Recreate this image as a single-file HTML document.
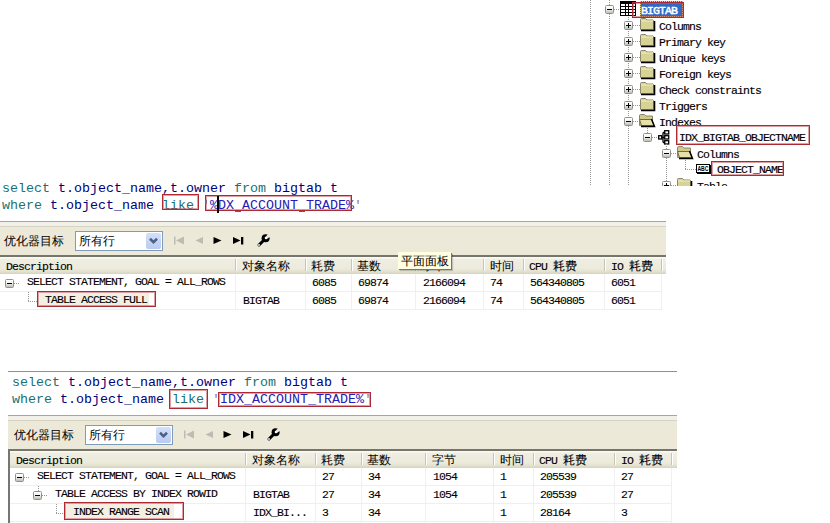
<!DOCTYPE html><html><head><meta charset="utf-8"><style>
html,body{margin:0;padding:0;background:#fff;}
body{width:830px;height:523px;position:relative;overflow:hidden;}
div{position:absolute;}
.sql{font-family:"Liberation Mono",monospace;font-size:13.33px;line-height:17px;color:#00007A;white-space:pre;}
.kw{color:#1B7070;}
.str{color:#1F22B3;}
.q{color:#8E7F8F;}
.g{font-family:"Liberation Mono",monospace;font-size:11.5px;letter-spacing:-0.9px;line-height:16px;color:#000;white-space:pre;-webkit-text-stroke:0.1px #000;}
.cjk{font-family:"Liberation Sans",sans-serif;font-size:12px;line-height:16px;color:#000;white-space:pre;}
.c2{font-family:"Liberation Sans",sans-serif;letter-spacing:0;}
.exp{width:9px;height:9px;box-sizing:border-box;border:1px solid #909090;border-radius:1.5px;background:linear-gradient(#fff 0,#F2F2EE 45%,#BDBDB5 100%);}
.exp i{position:absolute;background:#000;}
.exp .h{left:1px;top:3px;width:5px;height:1px;}
.exp .v{left:3px;top:1px;width:1px;height:5px;}
.texp{width:9px;height:9px;box-sizing:border-box;border:1px solid #909090;border-radius:1.5px;background:linear-gradient(#fff 0,#F2F2EE 45%,#BDBDB5 100%);}
.texp i{position:absolute;background:#000;}
.texp .h{left:1px;top:3px;width:5px;height:1px;}
.texp .v{left:3px;top:1px;width:1px;height:5px;}
.t{font-family:"Liberation Mono",monospace;font-size:11.5px;letter-spacing:-0.9px;line-height:16px;color:#000;white-space:pre;-webkit-text-stroke:0.15px #000;}

</style></head><body>
<div style="left:8px;top:371px;width:669px;height:1px;background:#8F8F8F;"></div>
<div class="sql" style="left:12px;top:374px;"><span class="kw">select</span> t.object_name,t.owner <span class="kw">from</span> bigtab t
<span class="kw">where</span> t.object_name <span class="kw">like</span> <span class="q">'</span><span class="str">IDX_ACCOUNT_TRADE%</span><span class="q">'</span></div>
<div style="left:8px;top:415px;width:669px;height:1px;background:#A7A69C;"></div>
<div style="left:8px;top:416px;width:669px;height:4px;background:#F2F1E9;"></div>
<div style="left:8px;top:420px;width:669px;height:1px;background:#D6D3C2;"></div>
<div style="left:8px;top:421px;width:669px;height:28px;background:#ECE9D8;"></div>
<div style="left:8px;top:449px;width:669px;height:2px;background:#76756C;"></div>
<div class="cjk" style="left:14px;top:427px;">优化器目标</div>
<div style="left:85px;top:425px;width:88px;height:20px;background:#fff;border:1px solid #7F9DB9;box-sizing:border-box;"></div>
<div class="cjk" style="left:89px;top:427px;">所有行</div>
<div style="left:156px;top:427px;width:15px;height:16px;background:linear-gradient(#D4E0FA,#B9CBF3);border-radius:2px;"></div>
<svg style="position:absolute;left:159px;top:431px" width="10" height="8" viewBox="0 0 10 8"><path d="M1 1.8 L4.5 5.2 L8 1.8" stroke="#4D6185" stroke-width="2.6" fill="none"/></svg>
<svg style="position:absolute;left:184px;top:430px" width="90" height="14" viewBox="0 0 90 14"><rect x="0" y="0.5" width="1.5" height="8" fill="#BDBCB3"/><path d="M10 0.5 L2 4.5 L10 8.5 Z" fill="#BDBCB3"/><path d="M29 1 L21.5 4.5 L29 8 Z" fill="#BDBCB3"/><path d="M39.5 1 L47.5 4.5 L39.5 8 Z" fill="#000"/><path d="M59 1 L66.5 4.5 L59 8 Z" fill="#000"/><rect x="67" y="1" width="2.3" height="7.5" fill="#000"/></svg>
<svg style="position:absolute;left:266px;top:427px" width="15" height="15" viewBox="0 0 15 15"><path d="M3 12 L8 7" stroke="#000" stroke-width="3" stroke-linecap="round"/><circle cx="9.6" cy="5.2" r="4" fill="#000"/><path d="M9.2 4.6 L12.6 0.2 L15.5 2.8 L10.6 6 Z" fill="#ECE9D8"/><circle cx="10" cy="5" r="1.3" fill="#fff"/><circle cx="3" cy="12" r="0.9" fill="#fff"/></svg>
<div style="left:8px;top:449px;width:2px;height:120px;background:#767676;"></div>
<div style="left:10px;top:451px;width:667px;height:17px;background:linear-gradient(#FAFAF5 0,#FAFAF5 1px,#EFEEE2 2px,#EBEADB 12px,#E2DFCC 15px,#D5D2C0 17px);"></div>
<div style="left:245px;top:453px;width:1px;height:12px;background:#C7C5B2;"></div>
<div style="left:246px;top:453px;width:1px;height:12px;background:#FFFFFF;"></div>
<div style="left:315px;top:453px;width:1px;height:12px;background:#C7C5B2;"></div>
<div style="left:316px;top:453px;width:1px;height:12px;background:#FFFFFF;"></div>
<div style="left:361px;top:453px;width:1px;height:12px;background:#C7C5B2;"></div>
<div style="left:362px;top:453px;width:1px;height:12px;background:#FFFFFF;"></div>
<div style="left:425px;top:453px;width:1px;height:12px;background:#C7C5B2;"></div>
<div style="left:426px;top:453px;width:1px;height:12px;background:#FFFFFF;"></div>
<div style="left:493px;top:453px;width:1px;height:12px;background:#C7C5B2;"></div>
<div style="left:494px;top:453px;width:1px;height:12px;background:#FFFFFF;"></div>
<div style="left:533px;top:453px;width:1px;height:12px;background:#C7C5B2;"></div>
<div style="left:534px;top:453px;width:1px;height:12px;background:#FFFFFF;"></div>
<div style="left:614px;top:453px;width:1px;height:12px;background:#C7C5B2;"></div>
<div style="left:615px;top:453px;width:1px;height:12px;background:#FFFFFF;"></div>
<div style="left:671px;top:453px;width:1px;height:12px;background:#C7C5B2;"></div>
<div style="left:672px;top:453px;width:1px;height:12px;background:#FFFFFF;"></div>
<div class="g" style="left:16px;top:453px;">Description</div>
<div class="cjk" style="left:252px;top:452px;">对象名称</div>
<div class="cjk" style="left:321px;top:452px;">耗费</div>
<div class="cjk" style="left:367px;top:452px;">基数</div>
<div class="cjk" style="left:432px;top:452px;">字节</div>
<div class="cjk" style="left:500px;top:452px;">时间</div>
<div class="g" style="left:539px;top:452px;">CPU <span class="c2">耗费</span></div>
<div class="g" style="left:621px;top:452px;">IO <span class="c2">耗费</span></div>
<div style="left:10px;top:485px;width:661px;height:1px;background:#EFEFEF;"></div>
<div style="left:10px;top:503px;width:661px;height:1px;background:#EFEFEF;"></div>
<div style="left:10px;top:521px;width:661px;height:1px;background:#EFEFEF;"></div>
<div style="left:245px;top:468px;width:1px;height:60px;background:#F0F0F0;"></div>
<div style="left:315px;top:468px;width:1px;height:60px;background:#F0F0F0;"></div>
<div style="left:361px;top:468px;width:1px;height:60px;background:#F0F0F0;"></div>
<div style="left:425px;top:468px;width:1px;height:60px;background:#F0F0F0;"></div>
<div style="left:493px;top:468px;width:1px;height:60px;background:#F0F0F0;"></div>
<div style="left:533px;top:468px;width:1px;height:60px;background:#F0F0F0;"></div>
<div style="left:614px;top:468px;width:1px;height:60px;background:#F0F0F0;"></div>
<div style="left:671px;top:468px;width:1px;height:60px;background:#F0F0F0;"></div>
<div class="g" style="left:322px;top:469px;">27</div>
<div class="g" style="left:368px;top:469px;">34</div>
<div class="g" style="left:433px;top:469px;">1054</div>
<div class="g" style="left:500px;top:469px;">1</div>
<div class="g" style="left:540px;top:469px;">205539</div>
<div class="g" style="left:621px;top:469px;">27</div>
<div class="g" style="left:253px;top:487px;">BIGTAB</div>
<div class="g" style="left:322px;top:487px;">27</div>
<div class="g" style="left:368px;top:487px;">34</div>
<div class="g" style="left:433px;top:487px;">1054</div>
<div class="g" style="left:500px;top:487px;">1</div>
<div class="g" style="left:540px;top:487px;">205539</div>
<div class="g" style="left:621px;top:487px;">27</div>
<div class="g" style="left:253px;top:505px;">IDX_BI...</div>
<div class="g" style="left:322px;top:505px;">3</div>
<div class="g" style="left:368px;top:505px;">34</div>
<div class="g" style="left:500px;top:505px;">1</div>
<div class="g" style="left:540px;top:505px;">28164</div>
<div class="g" style="left:621px;top:505px;">3</div>
<div class="exp" style="left:15px;top:473px;"><i class="h"></i></div>
<div style="left:24px;top:477px;width:6px;height:1px;background:repeating-linear-gradient(to right,#969696 0 1px,transparent 1px 2px);"></div>
<div class="g" style="left:37px;top:468px;">SELECT STATEMENT, GOAL = ALL_ROWS</div>
<div style="left:38px;top:486px;width:1px;height:5px;background:repeating-linear-gradient(to bottom,#969696 0 1px,transparent 1px 2px);"></div>
<div class="exp" style="left:33px;top:491px;"><i class="h"></i></div>
<div style="left:42px;top:495px;width:6px;height:1px;background:repeating-linear-gradient(to right,#969696 0 1px,transparent 1px 2px);"></div>
<div class="g" style="left:55px;top:486px;">TABLE ACCESS BY INDEX ROWID</div>
<div style="left:56px;top:504px;width:1px;height:9px;background:repeating-linear-gradient(to bottom,#969696 0 1px,transparent 1px 2px);"></div>
<div style="left:56px;top:513px;width:8px;height:1px;background:repeating-linear-gradient(to right,#969696 0 1px,transparent 1px 2px);"></div>
<div style="left:66px;top:504px;width:108px;height:14px;background:#F3EFE2;"></div>
<div class="g" style="left:73px;top:504px;">INDEX RANGE SCAN</div>
<div style="left:64px;top:502px;width:120px;height:18px;border:1px solid #AE2A32;box-shadow:inset 0 0 0 1px rgba(196,80,88,0.55);box-sizing:border-box;"></div>
<div style="left:169px;top:389px;width:39px;height:20px;border:1px solid #AE2A32;box-shadow:inset 0 0 0 1px rgba(196,80,88,0.55);box-sizing:border-box;"></div>
<div style="left:218px;top:392px;width:153px;height:15px;border:1px solid #AE2A32;box-shadow:inset 0 0 0 1px rgba(196,80,88,0.55);box-sizing:border-box;"></div>
<div class="sql" style="left:2px;top:180px;"><span class="kw">select</span> t.object_name,t.owner <span class="kw">from</span> bigtab t
<span class="kw">where</span> t.object_name <span class="kw">like</span> <span class="q">'</span><span class="str">%DX_ACCOUNT_TRADE%</span><span class="q">'</span></div>
<div style="left:-2px;top:221px;width:668px;height:1px;background:#A7A69C;"></div>
<div style="left:-2px;top:222px;width:668px;height:4px;background:#F2F1E9;"></div>
<div style="left:-2px;top:226px;width:668px;height:1px;background:#D6D3C2;"></div>
<div style="left:-2px;top:227px;width:668px;height:28px;background:#ECE9D8;"></div>
<div style="left:-2px;top:255px;width:668px;height:2px;background:#76756C;"></div>
<div class="cjk" style="left:4px;top:233px;">优化器目标</div>
<div style="left:75px;top:231px;width:88px;height:20px;background:#fff;border:1px solid #7F9DB9;box-sizing:border-box;"></div>
<div class="cjk" style="left:79px;top:233px;">所有行</div>
<div style="left:146px;top:233px;width:15px;height:16px;background:linear-gradient(#D4E0FA,#B9CBF3);border-radius:2px;"></div>
<svg style="position:absolute;left:149px;top:237px" width="10" height="8" viewBox="0 0 10 8"><path d="M1 1.8 L4.5 5.2 L8 1.8" stroke="#4D6185" stroke-width="2.6" fill="none"/></svg>
<svg style="position:absolute;left:174px;top:236px" width="90" height="14" viewBox="0 0 90 14"><rect x="0" y="0.5" width="1.5" height="8" fill="#BDBCB3"/><path d="M10 0.5 L2 4.5 L10 8.5 Z" fill="#BDBCB3"/><path d="M29 1 L21.5 4.5 L29 8 Z" fill="#BDBCB3"/><path d="M39.5 1 L47.5 4.5 L39.5 8 Z" fill="#000"/><path d="M59 1 L66.5 4.5 L59 8 Z" fill="#000"/><rect x="67" y="1" width="2.3" height="7.5" fill="#000"/></svg>
<svg style="position:absolute;left:256px;top:233px" width="15" height="15" viewBox="0 0 15 15"><path d="M3 12 L8 7" stroke="#000" stroke-width="3" stroke-linecap="round"/><circle cx="9.6" cy="5.2" r="4" fill="#000"/><path d="M9.2 4.6 L12.6 0.2 L15.5 2.8 L10.6 6 Z" fill="#ECE9D8"/><circle cx="10" cy="5" r="1.3" fill="#fff"/><circle cx="3" cy="12" r="0.9" fill="#fff"/></svg>
<div style="left:-2px;top:255px;width:2px;height:120px;background:#767676;"></div>
<div style="left:0px;top:257px;width:666px;height:17px;background:linear-gradient(#FAFAF5 0,#FAFAF5 1px,#EFEEE2 2px,#EBEADB 12px,#E2DFCC 15px,#D5D2C0 17px);"></div>
<div style="left:235px;top:259px;width:1px;height:12px;background:#C7C5B2;"></div>
<div style="left:236px;top:259px;width:1px;height:12px;background:#FFFFFF;"></div>
<div style="left:305px;top:259px;width:1px;height:12px;background:#C7C5B2;"></div>
<div style="left:306px;top:259px;width:1px;height:12px;background:#FFFFFF;"></div>
<div style="left:351px;top:259px;width:1px;height:12px;background:#C7C5B2;"></div>
<div style="left:352px;top:259px;width:1px;height:12px;background:#FFFFFF;"></div>
<div style="left:415px;top:259px;width:1px;height:12px;background:#C7C5B2;"></div>
<div style="left:416px;top:259px;width:1px;height:12px;background:#FFFFFF;"></div>
<div style="left:483px;top:259px;width:1px;height:12px;background:#C7C5B2;"></div>
<div style="left:484px;top:259px;width:1px;height:12px;background:#FFFFFF;"></div>
<div style="left:523px;top:259px;width:1px;height:12px;background:#C7C5B2;"></div>
<div style="left:524px;top:259px;width:1px;height:12px;background:#FFFFFF;"></div>
<div style="left:604px;top:259px;width:1px;height:12px;background:#C7C5B2;"></div>
<div style="left:605px;top:259px;width:1px;height:12px;background:#FFFFFF;"></div>
<div style="left:661px;top:259px;width:1px;height:12px;background:#C7C5B2;"></div>
<div style="left:662px;top:259px;width:1px;height:12px;background:#FFFFFF;"></div>
<div class="g" style="left:6px;top:259px;">Description</div>
<div class="cjk" style="left:242px;top:258px;">对象名称</div>
<div class="cjk" style="left:311px;top:258px;">耗费</div>
<div class="cjk" style="left:357px;top:258px;">基数</div>
<div class="cjk" style="left:422px;top:258px;">字节</div>
<div class="cjk" style="left:490px;top:258px;">时间</div>
<div class="g" style="left:529px;top:258px;">CPU <span class="c2">耗费</span></div>
<div class="g" style="left:611px;top:258px;">IO <span class="c2">耗费</span></div>
<div style="left:0px;top:291px;width:661px;height:1px;background:#EFEFEF;"></div>
<div style="left:0px;top:309px;width:661px;height:1px;background:#EFEFEF;"></div>
<div style="left:0px;top:327px;width:661px;height:1px;background:#EFEFEF;"></div>
<div style="left:235px;top:274px;width:1px;height:60px;background:#F0F0F0;"></div>
<div style="left:305px;top:274px;width:1px;height:60px;background:#F0F0F0;"></div>
<div style="left:351px;top:274px;width:1px;height:60px;background:#F0F0F0;"></div>
<div style="left:415px;top:274px;width:1px;height:60px;background:#F0F0F0;"></div>
<div style="left:483px;top:274px;width:1px;height:60px;background:#F0F0F0;"></div>
<div style="left:523px;top:274px;width:1px;height:60px;background:#F0F0F0;"></div>
<div style="left:604px;top:274px;width:1px;height:60px;background:#F0F0F0;"></div>
<div style="left:661px;top:274px;width:1px;height:60px;background:#F0F0F0;"></div>
<div class="g" style="left:312px;top:275px;">6085</div>
<div class="g" style="left:358px;top:275px;">69874</div>
<div class="g" style="left:423px;top:275px;">2166094</div>
<div class="g" style="left:490px;top:275px;">74</div>
<div class="g" style="left:530px;top:275px;">564340805</div>
<div class="g" style="left:611px;top:275px;">6051</div>
<div class="g" style="left:243px;top:293px;">BIGTAB</div>
<div class="g" style="left:312px;top:293px;">6085</div>
<div class="g" style="left:358px;top:293px;">69874</div>
<div class="g" style="left:423px;top:293px;">2166094</div>
<div class="g" style="left:490px;top:293px;">74</div>
<div class="g" style="left:530px;top:293px;">564340805</div>
<div class="g" style="left:611px;top:293px;">6051</div>
<div style="left:0px;top:310px;width:830px;height:60px;background:#fff;"></div>
<div class="exp" style="left:5px;top:279px;"><i class="h"></i></div>
<div style="left:14px;top:283px;width:6px;height:1px;background:repeating-linear-gradient(to right,#969696 0 1px,transparent 1px 2px);"></div>
<div class="g" style="left:27px;top:274px;">SELECT STATEMENT, GOAL = ALL_ROWS</div>
<div style="left:28px;top:292px;width:1px;height:10px;background:repeating-linear-gradient(to bottom,#969696 0 1px,transparent 1px 2px);"></div>
<div style="left:28px;top:301px;width:9px;height:1px;background:repeating-linear-gradient(to right,#969696 0 1px,transparent 1px 2px);"></div>
<div style="left:39px;top:293px;width:110px;height:13px;background:#F3EFE2;"></div>
<div class="g" style="left:45px;top:292px;">TABLE ACCESS FULL</div>
<div style="left:37px;top:291px;width:119px;height:16px;border:1px solid #AE2A32;box-shadow:inset 0 0 0 1px rgba(196,80,88,0.55);box-sizing:border-box;"></div>
<div style="left:162px;top:194px;width:37px;height:16px;border:1px solid #AE2A32;box-shadow:inset 0 0 0 1px rgba(196,80,88,0.55);box-sizing:border-box;"></div>
<div style="left:205px;top:195px;width:147px;height:16px;border:1px solid #AE2A32;box-shadow:inset 0 0 0 1px rgba(196,80,88,0.55);box-sizing:border-box;"></div>
<div style="left:217px;top:196px;width:2px;height:17px;background:#000;"></div>
<div class="sql" style="left:202px;top:197px;color:#8E5F8F;">'</div>
<div style="left:235px;top:211px;width:6px;height:1px;background:#7A4A9A;"></div>
<div style="left:299px;top:211px;width:6px;height:1px;background:#7A4A9A;"></div>
<div style="left:398px;top:252px;width:53px;height:17px;background:#FFFFE1;box-shadow:1px 1px 0 #767670,2px 2px 1px rgba(0,0,0,0.18);"></div>
<div class="cjk" style="left:401px;top:253px;">平面面板</div>
<div style="left:590px;top:0px;width:240px;height:186px;background:#fff;"></div>
<div style="left:590px;top:0px;width:1px;height:186px;background:repeating-linear-gradient(to bottom,#969696 0 1px,transparent 1px 2px);"></div>
<div style="left:609px;top:0px;width:1px;height:5px;background:repeating-linear-gradient(to bottom,#969696 0 1px,transparent 1px 2px);"></div>
<div style="left:609px;top:14px;width:1px;height:172px;background:repeating-linear-gradient(to bottom,#969696 0 1px,transparent 1px 2px);"></div>
<div class="texp" style="left:605px;top:5px;"><i class="h"></i></div>
<div style="left:614px;top:9px;width:6px;height:1px;background:repeating-linear-gradient(to right,#969696 0 1px,transparent 1px 2px);"></div>
<svg style="position:absolute;left:620px;top:1px" width="16" height="15" viewBox="0 0 16 15"><rect x="0" y="0" width="16" height="15" fill="#000"/><rect x="1" y="3" width="4" height="2" fill="#fff"/><rect x="6" y="3" width="2" height="2" fill="#fff"/><rect x="9" y="3" width="3" height="2" fill="#fff"/><rect x="13" y="3" width="2" height="2" fill="#fff"/><rect x="1" y="6" width="4" height="2" fill="#fff"/><rect x="6" y="6" width="2" height="2" fill="#fff"/><rect x="9" y="6" width="3" height="2" fill="#fff"/><rect x="13" y="6" width="2" height="2" fill="#fff"/><rect x="1" y="9" width="4" height="2" fill="#fff"/><rect x="6" y="9" width="2" height="2" fill="#fff"/><rect x="9" y="9" width="3" height="2" fill="#fff"/><rect x="13" y="9" width="2" height="2" fill="#fff"/><rect x="1" y="12" width="4" height="2" fill="#fff"/><rect x="6" y="12" width="2" height="2" fill="#fff"/><rect x="9" y="12" width="3" height="2" fill="#fff"/><rect x="13" y="12" width="2" height="2" fill="#fff"/></svg>
<div style="left:640px;top:1px;width:43px;height:16px;background:#316AC5;"></div>
<div style="left:640px;top:1px;width:43px;height:16px;border:1px dotted #E8D080;box-sizing:border-box;"></div>
<div class="t" style="left:641px;top:3px;color:#fff;-webkit-text-stroke:0.5px #fff;">BIGTAB</div>
<div style="left:632px;top:2px;width:52px;height:16px;border:1px solid #AE2A32;box-shadow:inset 0 0 0 1px rgba(196,80,88,0.55);box-sizing:border-box;"></div>
<div style="left:628px;top:17px;width:1px;height:100px;background:repeating-linear-gradient(to bottom,#969696 0 1px,transparent 1px 2px);"></div>
<div class="texp" style="left:624px;top:21px;"><i class="h"></i><i class="v"></i></div>
<div style="left:633px;top:25px;width:7px;height:1px;background:repeating-linear-gradient(to right,#969696 0 1px,transparent 1px 2px);"></div>
<svg style="position:absolute;left:640px;top:18px" width="16" height="14" viewBox="0 0 16 14"><path d="M0.5 3 L0.5 1.5 Q0.5 0.5 1.5 0.5 L5.5 0.5 L7 2 L13 2 Q13.5 2 13.5 2.5 L13.5 11.5 L0.5 11.5 Z" fill="#D6D394" stroke="#8A876A"/><path d="M1 3 L13 3" stroke="#F2EFC4"/><path d="M14.5 3 L14.5 12.5 L1 12.5" stroke="#000" stroke-width="1.6" fill="none"/></svg>
<div class="t" style="left:659px;top:19px;">Columns</div>
<div class="texp" style="left:624px;top:37px;"><i class="h"></i><i class="v"></i></div>
<div style="left:633px;top:41px;width:7px;height:1px;background:repeating-linear-gradient(to right,#969696 0 1px,transparent 1px 2px);"></div>
<svg style="position:absolute;left:640px;top:34px" width="16" height="14" viewBox="0 0 16 14"><path d="M0.5 3 L0.5 1.5 Q0.5 0.5 1.5 0.5 L5.5 0.5 L7 2 L13 2 Q13.5 2 13.5 2.5 L13.5 11.5 L0.5 11.5 Z" fill="#D6D394" stroke="#8A876A"/><path d="M1 3 L13 3" stroke="#F2EFC4"/><path d="M14.5 3 L14.5 12.5 L1 12.5" stroke="#000" stroke-width="1.6" fill="none"/></svg>
<div class="t" style="left:659px;top:35px;">Primary key</div>
<div class="texp" style="left:624px;top:53px;"><i class="h"></i><i class="v"></i></div>
<div style="left:633px;top:57px;width:7px;height:1px;background:repeating-linear-gradient(to right,#969696 0 1px,transparent 1px 2px);"></div>
<svg style="position:absolute;left:640px;top:50px" width="16" height="14" viewBox="0 0 16 14"><path d="M0.5 3 L0.5 1.5 Q0.5 0.5 1.5 0.5 L5.5 0.5 L7 2 L13 2 Q13.5 2 13.5 2.5 L13.5 11.5 L0.5 11.5 Z" fill="#D6D394" stroke="#8A876A"/><path d="M1 3 L13 3" stroke="#F2EFC4"/><path d="M14.5 3 L14.5 12.5 L1 12.5" stroke="#000" stroke-width="1.6" fill="none"/></svg>
<div class="t" style="left:659px;top:51px;">Unique keys</div>
<div class="texp" style="left:624px;top:69px;"><i class="h"></i><i class="v"></i></div>
<div style="left:633px;top:73px;width:7px;height:1px;background:repeating-linear-gradient(to right,#969696 0 1px,transparent 1px 2px);"></div>
<svg style="position:absolute;left:640px;top:66px" width="16" height="14" viewBox="0 0 16 14"><path d="M0.5 3 L0.5 1.5 Q0.5 0.5 1.5 0.5 L5.5 0.5 L7 2 L13 2 Q13.5 2 13.5 2.5 L13.5 11.5 L0.5 11.5 Z" fill="#D6D394" stroke="#8A876A"/><path d="M1 3 L13 3" stroke="#F2EFC4"/><path d="M14.5 3 L14.5 12.5 L1 12.5" stroke="#000" stroke-width="1.6" fill="none"/></svg>
<div class="t" style="left:659px;top:67px;">Foreign keys</div>
<div class="texp" style="left:624px;top:85px;"><i class="h"></i><i class="v"></i></div>
<div style="left:633px;top:89px;width:7px;height:1px;background:repeating-linear-gradient(to right,#969696 0 1px,transparent 1px 2px);"></div>
<svg style="position:absolute;left:640px;top:82px" width="16" height="14" viewBox="0 0 16 14"><path d="M0.5 3 L0.5 1.5 Q0.5 0.5 1.5 0.5 L5.5 0.5 L7 2 L13 2 Q13.5 2 13.5 2.5 L13.5 11.5 L0.5 11.5 Z" fill="#D6D394" stroke="#8A876A"/><path d="M1 3 L13 3" stroke="#F2EFC4"/><path d="M14.5 3 L14.5 12.5 L1 12.5" stroke="#000" stroke-width="1.6" fill="none"/></svg>
<div class="t" style="left:659px;top:83px;">Check constraints</div>
<div class="texp" style="left:624px;top:101px;"><i class="h"></i><i class="v"></i></div>
<div style="left:633px;top:105px;width:7px;height:1px;background:repeating-linear-gradient(to right,#969696 0 1px,transparent 1px 2px);"></div>
<svg style="position:absolute;left:640px;top:98px" width="16" height="14" viewBox="0 0 16 14"><path d="M0.5 3 L0.5 1.5 Q0.5 0.5 1.5 0.5 L5.5 0.5 L7 2 L13 2 Q13.5 2 13.5 2.5 L13.5 11.5 L0.5 11.5 Z" fill="#D6D394" stroke="#8A876A"/><path d="M1 3 L13 3" stroke="#F2EFC4"/><path d="M14.5 3 L14.5 12.5 L1 12.5" stroke="#000" stroke-width="1.6" fill="none"/></svg>
<div class="t" style="left:659px;top:99px;">Triggers</div>
<div class="texp" style="left:624px;top:117px;"><i class="h"></i></div>
<div style="left:633px;top:121px;width:6px;height:1px;background:repeating-linear-gradient(to right,#969696 0 1px,transparent 1px 2px);"></div>
<svg style="position:absolute;left:639px;top:114px" width="17" height="14" viewBox="0 0 17 14"><path d="M0.5 2 Q0.5 0.5 1.5 0.5 L5.5 0.5 L7 2 L13.5 2 L13.5 11.5 L0.5 11.5 Z" fill="#CFCB8A" stroke="#8A876A"/><path d="M0.5 5.5 L12.5 5.5 L15 11.5 L2.5 11.5 Z" fill="#E4E0A8" stroke="#6E6A4A"/><path d="M12.5 5 L15.5 12.5 L2 12.5" stroke="#000" stroke-width="1.5" fill="none"/></svg>
<div class="t" style="left:659px;top:115px;">Indexes</div>
<div style="left:647px;top:128px;width:1px;height:5px;background:repeating-linear-gradient(to bottom,#969696 0 1px,transparent 1px 2px);"></div>
<div style="left:628px;top:126px;width:1px;height:60px;background:repeating-linear-gradient(to bottom,#969696 0 1px,transparent 1px 2px);"></div>
<div class="texp" style="left:643px;top:133px;"><i class="h"></i></div>
<div style="left:652px;top:137px;width:6px;height:1px;background:repeating-linear-gradient(to right,#969696 0 1px,transparent 1px 2px);"></div>
<svg style="position:absolute;left:658px;top:130px" width="12" height="15" viewBox="0 0 12 15"><g fill="#fff" stroke="#000" stroke-width="1.3"><path d="M3.5 7.5 L6 7.5 M5 2.5 L5 12.5 M5 2.5 L7 2.5 M5 12.5 L7 12.5" fill="none"/><rect x="0.7" y="5.7" width="3" height="3.3"/><rect x="6.7" y="0.7" width="4" height="3.3"/><rect x="6.7" y="5.7" width="4" height="3.3"/><rect x="6.7" y="10.7" width="4" height="3.3"/></g></svg>
<div class="t" style="left:679px;top:130px;">IDX_BIGTAB_OBJECTNAME</div>
<div style="left:676px;top:125px;width:134px;height:20px;border:1px solid #AE2A32;box-shadow:inset 0 0 0 1px rgba(196,80,88,0.55);box-sizing:border-box;"></div>
<div style="left:666px;top:144px;width:1px;height:5px;background:repeating-linear-gradient(to bottom,#969696 0 1px,transparent 1px 2px);"></div>
<div style="left:666px;top:158px;width:1px;height:28px;background:repeating-linear-gradient(to bottom,#969696 0 1px,transparent 1px 2px);"></div>
<div class="texp" style="left:662px;top:149px;"><i class="h"></i></div>
<div style="left:671px;top:153px;width:6px;height:1px;background:repeating-linear-gradient(to right,#969696 0 1px,transparent 1px 2px);"></div>
<svg style="position:absolute;left:677px;top:146px" width="17" height="14" viewBox="0 0 17 14"><path d="M0.5 2 Q0.5 0.5 1.5 0.5 L5.5 0.5 L7 2 L13.5 2 L13.5 11.5 L0.5 11.5 Z" fill="#CFCB8A" stroke="#8A876A"/><path d="M0.5 5.5 L12.5 5.5 L15 11.5 L2.5 11.5 Z" fill="#E4E0A8" stroke="#6E6A4A"/><path d="M12.5 5 L15.5 12.5 L2 12.5" stroke="#000" stroke-width="1.5" fill="none"/></svg>
<div class="t" style="left:697px;top:147px;">Columns</div>
<div style="left:685px;top:160px;width:1px;height:9px;background:repeating-linear-gradient(to bottom,#969696 0 1px,transparent 1px 2px);"></div>
<div style="left:685px;top:169px;width:11px;height:1px;background:repeating-linear-gradient(to right,#969696 0 1px,transparent 1px 2px);"></div>
<svg style="position:absolute;left:696px;top:164px" width="15" height="10" viewBox="0 0 15 10"><rect x="0.5" y="0.5" width="13" height="8" fill="#fff" stroke="#000"/><rect x="13" y="1" width="2" height="9" fill="#000"/><rect x="1" y="8" width="14" height="2" fill="#000"/><text x="1.4" y="7.3" font-family="Liberation Sans" font-size="7" font-weight="bold" fill="#000" textLength="11" lengthAdjust="spacingAndGlyphs">ABC</text></svg>
<div class="t" style="left:717px;top:162px;">OBJECT_NAME</div>
<div style="left:711px;top:161px;width:73px;height:15px;border:1px solid #AE2A32;box-shadow:inset 0 0 0 1px rgba(196,80,88,0.55);box-sizing:border-box;"></div>
<div class="texp" style="left:662px;top:181px;"><i class="h"></i><i class="v"></i></div>
<div style="left:671px;top:185px;width:6px;height:1px;background:repeating-linear-gradient(to right,#969696 0 1px,transparent 1px 2px);"></div>
<svg style="position:absolute;left:677px;top:178px" width="16" height="14" viewBox="0 0 16 14"><path d="M0.5 3 L0.5 1.5 Q0.5 0.5 1.5 0.5 L5.5 0.5 L7 2 L13 2 Q13.5 2 13.5 2.5 L13.5 11.5 L0.5 11.5 Z" fill="#D6D394" stroke="#8A876A"/><path d="M1 3 L13 3" stroke="#F2EFC4"/><path d="M14.5 3 L14.5 12.5 L1 12.5" stroke="#000" stroke-width="1.6" fill="none"/></svg>
<div class="t" style="left:697px;top:179px;">Table</div>
<div style="left:590px;top:186px;width:240px;height:10px;background:#fff;"></div>
</body></html>
